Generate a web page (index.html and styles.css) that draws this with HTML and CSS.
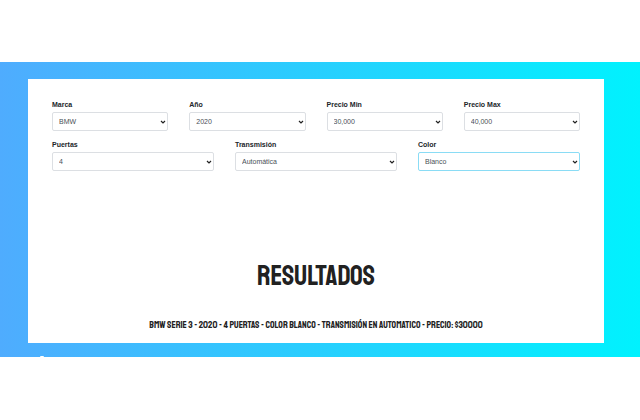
FILE: index.html
```html
<!DOCTYPE html>
<html lang="es">
<head>
<meta charset="utf-8">
<title>Buscador de autos</title>
<link rel="stylesheet" href="styles.css">
</head>
<body>
<main class="band">
  <div class="card">
    <form class="filters">
      <div class="row">
        <div class="field">
          <label for="marca">Marca</label>
          <div class="control"><select id="marca"><option>BMW</option></select><svg class="chevron" viewBox="0 0 6 4" aria-hidden="true"><path d="M1 1l2 2 2-2"/></svg></div>
        </div>
        <div class="field">
          <label for="year">Año</label>
          <div class="control"><select id="year"><option>2020</option></select><svg class="chevron" viewBox="0 0 6 4" aria-hidden="true"><path d="M1 1l2 2 2-2"/></svg></div>
        </div>
        <div class="field">
          <label for="minimo">Precio Min</label>
          <div class="control"><select id="minimo"><option>30,000</option></select><svg class="chevron" viewBox="0 0 6 4" aria-hidden="true"><path d="M1 1l2 2 2-2"/></svg></div>
        </div>
        <div class="field">
          <label for="maximo">Precio Max</label>
          <div class="control"><select id="maximo"><option>40,000</option></select><svg class="chevron" viewBox="0 0 6 4" aria-hidden="true"><path d="M1 1l2 2 2-2"/></svg></div>
        </div>
      </div>
      <div class="row">
        <div class="field">
          <label for="puertas">Puertas</label>
          <div class="control"><select id="puertas"><option>4</option></select><svg class="chevron" viewBox="0 0 6 4" aria-hidden="true"><path d="M1 1l2 2 2-2"/></svg></div>
        </div>
        <div class="field">
          <label for="transmision">Transmisión</label>
          <div class="control"><select id="transmision"><option>Automática</option></select><svg class="chevron" viewBox="0 0 6 4" aria-hidden="true"><path d="M1 1l2 2 2-2"/></svg></div>
        </div>
        <div class="field">
          <label for="color">Color</label>
          <div class="control"><select id="color" class="active"><option>Blanco</option></select><svg class="chevron" viewBox="0 0 6 4" aria-hidden="true"><path d="M1 1l2 2 2-2"/></svg></div>
        </div>
      </div>
    </form>
    <h1>RESULTADOS</h1>
    <p class="result">BMW SERIE 3 - 2020 - 4 PUERTAS - COLOR BLANCO - TRANSMISIÓN EN AUTOMATICO - PRECIO: $30000</p>
  </div>
  <span class="notch"></span>
</main>
</body>
</html>
```
FILE: styles.css
```css
* {
  box-sizing: border-box;
}

body {
  margin: 0;
  padding-top: 62px;
  background: #fff;
  color: #212529;
  font-family: "Liberation Sans", Arial, sans-serif;
  font-size: 7px;
}

.band {
  position: relative;
  padding: 17px 36px 14px 28px;
  background: linear-gradient(to right, #4facfe, #00f2fe);
}

.card {
  padding: 21px 24px 12px;
  background: #fff;
}

.filters {
  display: grid;
  gap: 9px;
}

.row {
  display: grid;
  grid-auto-flow: column;
  grid-auto-columns: 1fr;
  gap: 21px;
}

.field {
  display: grid;
  gap: 2px;
}

label {
  font-weight: bold;
  line-height: 10px;
}

.control {
  display: grid;
  align-items: center;
}

select,
.chevron {
  grid-area: 1 / 1;
}

select {
  appearance: none;
  width: 100%;
  height: 19px;
  padding: 0 6px;
  border: 1px solid #dcdfe3;
  border-radius: 2px;
  background: #fff;
  color: #495057;
  font: inherit;
}

select.active {
  border-color: #8adcf5;
}

.chevron {
  justify-self: end;
  width: 6px;
  height: 4px;
  margin-right: 2px;
  fill: none;
  stroke: #222;
  stroke-width: 1.2;
  pointer-events: none;
}

h1,
.result {
  margin: 0;
  color: #212121;
  font-family: "Staatliches", "Liberation Sans Narrow", sans-serif;
  font-weight: normal;
  text-align: center;
}

h1 {
  margin-top: 89px;
  font-size: 28px;
  line-height: 32px;
}

.result {
  margin-top: 27px;
  font-size: 10px;
  line-height: 12px;
}

.notch {
  position: absolute;
  bottom: 0;
  left: 40px;
  width: 4px;
  height: 1px;
  border-radius: 2px 2px 0 0;
  background: #fff;
}
```
